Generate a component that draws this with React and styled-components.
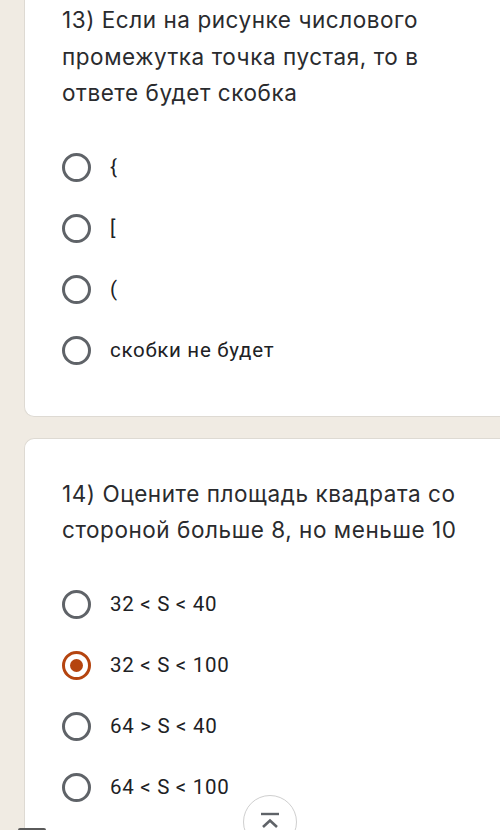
import React from "react";
import styled, { createGlobalStyle } from "styled-components";

const GlobalStyle = createGlobalStyle`
  html, body {
    margin: 0;
    padding: 0;
    background: #f0ebe3;
    overflow: hidden;
  }
  body {
    font-family: Roboto, "Noto Sans", sans-serif;
    color: #202124;
  }
`;

const questions = [
  {
    title: "13) Если на рисунке числового промежутка точка пустая, то в ответе будет скобка",
    options: ["{", "[", "(", "скобки не будет"],
    selected: -1
  },
  {
    title: "14) Оцените площадь квадрата со стороной больше 8, но меньше 10",
    options: ["32 < S < 40", "32 < S < 100", "64 > S < 40", "64 < S < 100"],
    selected: 1
  }
];

const App = () => {
  return (
    <Page>
      <GlobalStyle />
      <CardList>
        {questions.map((q, i) => (
          <Card key={i}>
            <Title>{q.title}</Title>
            <Options>
              {q.options.map((opt, j) => (
                <OptionRow key={j}>
                  <Radio checked={j === q.selected}>
                    {j === q.selected ? <Dot /> : null}
                  </Radio>
                  <OptionLabel>{opt}</OptionLabel>
                </OptionRow>
              ))}
            </Options>
          </Card>
        ))}
      </CardList>

      <ScrollTop aria-label="Наверх">
        <svg width="26" height="26" viewBox="0 0 26 26">
          <path d="M4 4h18" stroke="#5f6368" strokeWidth="2.4" fill="none" />
          <path d="M6 17l7-6.5 7 6.5" stroke="#5f6368" strokeWidth="2.6" fill="none" />
        </svg>
      </ScrollTop>
      <CornerTab />
    </Page>
  );
};

export default App;

const Page = styled.div`
  position: relative;
  width: 500px;
  height: 830px;
  overflow: hidden;
`;

const CardList = styled.div`
  display: flex;
  flex-direction: column;
  gap: 21px;
  margin-top: -36px;
  padding-left: 24px;
`;

const Card = styled.div`
  width: 520px;
  background: #ffffff;
  border: 1px solid #dedad3;
  border-right: none;
  border-radius: 10px;
  padding: 37px 0 35px 37px;
  box-sizing: border-box;
`;

const Title = styled.div`
  font-family: Inter, Roboto, sans-serif;
  font-size: 22.5px;
  font-weight: 400;
  letter-spacing: 0.55px;
  line-height: 36.5px;
  color: #2a2b2e;
  width: 412px;
`;

const Options = styled.div`
  display: flex;
  flex-direction: column;
  margin-top: 25px;
`;

const OptionRow = styled.div`
  display: flex;
  align-items: center;
  height: 61px;
`;

const Radio = styled.div`
  width: 29px;
  height: 29px;
  box-sizing: border-box;
  border-radius: 50%;
  border: 3px solid ${p => (p.checked ? "#b5440f" : "#5f6368")};
  display: flex;
  align-items: center;
  justify-content: center;
  flex-shrink: 0;
`;

const Dot = styled.div`
  width: 13px;
  height: 13px;
  border-radius: 50%;
  background: #b5440f;
`;

const OptionLabel = styled.span`
  margin-left: 19px;
  font-size: 20.5px;
  letter-spacing: 0.7px;
  color: #202124;
`;

const ScrollTop = styled.button`
  position: absolute;
  left: 243px;
  top: 795px;
  width: 54px;
  height: 54px;
  border-radius: 50%;
  background: #ffffff;
  border: 1.5px solid #cfcfcf;
  padding: 14px 0 0;
  display: flex;
  justify-content: center;
  align-items: flex-start;
  box-sizing: border-box;
`;

const CornerTab = styled.div`
  position: absolute;
  left: 18px;
  top: 828px;
  width: 28px;
  height: 4px;
  background: #5a5a5a;
  border-radius: 2px 2px 0 0;
`;
